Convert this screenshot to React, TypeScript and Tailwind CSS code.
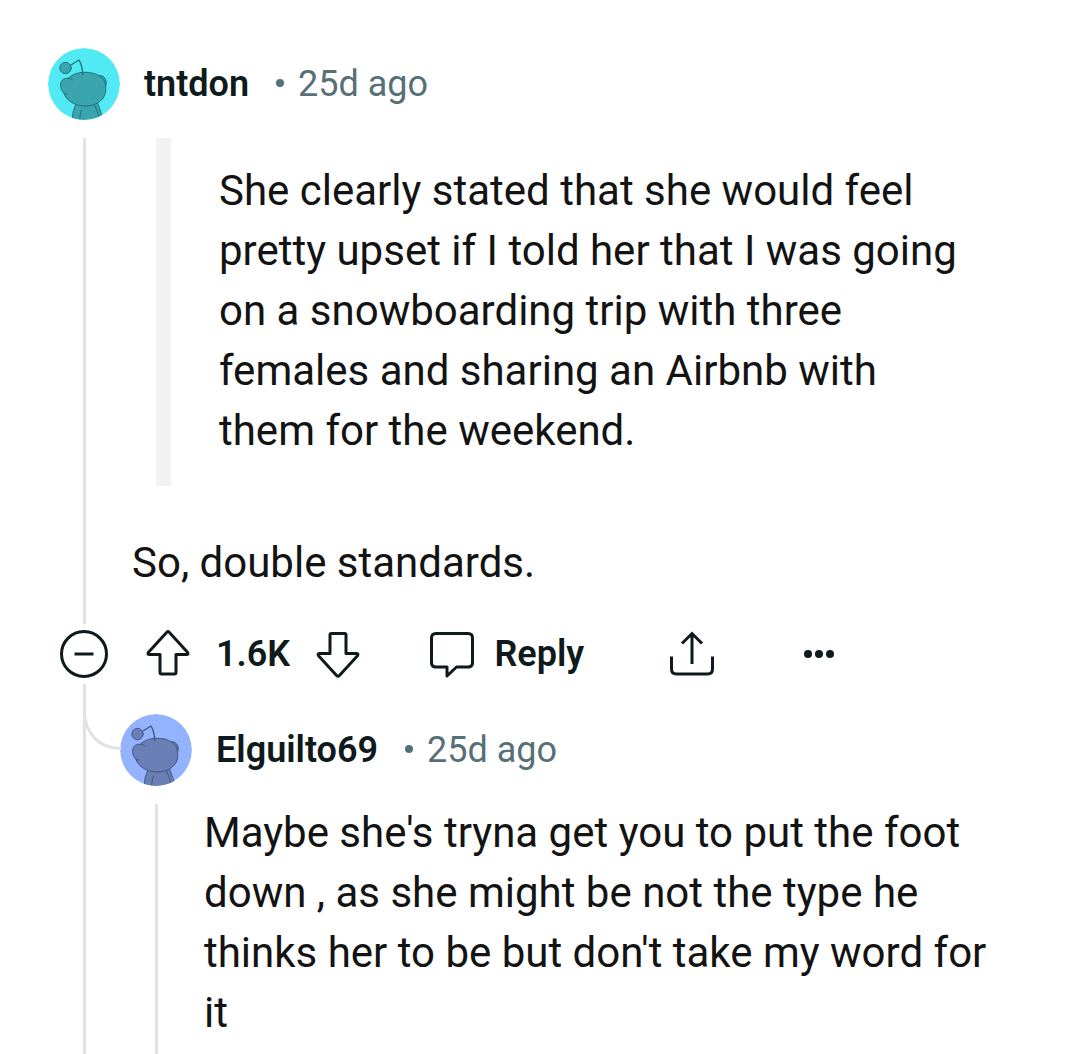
import React from "react";

type AvatarProps = { bg: string; body: string; line: string };

function Avatar({ bg, body, line }: AvatarProps) {
  return (
    <svg className="h-[72px] w-[72px] shrink-0 rounded-full" viewBox="0 0 72 72">
      <circle cx="36" cy="36" r="36" fill={bg} />
      <g fill={body} stroke={line} strokeWidth="1" strokeLinecap="round" strokeLinejoin="round">
        <path d="M50.500 28C55 26 60.500 32 57.500 38.500Z" />
        <path d="M24.200 74C24.200 66 25.500 61 28.500 55H49.500C52 61 54 66 54.500 74Z" />
        <path d="M33.500 62C32 65 31.800 69 31.800 73M46.200 57C48.800 61 50.500 66 51.500 73" fill="none" />
        <path d="M20 30.500C24 26.500 30 24.300 37 24.300C46 24.300 53 27.500 56 32.500C57.200 35 57.800 38 57.800 41.500C57.800 51 49 58 38 58C27 58 18.500 53 15.800 45C11.500 41 11.500 33.500 15.500 31.200C18 30 22 29.500 24.500 31.800" />
        <path d="M15.800 45C17 46 18 46.200 19.500 45.800" fill="none" />
        <path d="M34.800 26.500C34.500 21 33.500 16 31 12L23 17" fill="none" strokeWidth="1.400" />
        <circle cx="17.500" cy="20" r="5.700" />
      </g>
    </svg>
  );
}

function Byline({ name, children }: { name: string; children: React.ReactNode }) {
  return (
    <header className="flex h-[72px] items-center text-[36px] leading-[42px]">
      {children}
      <span className="ml-6 font-semibold text-[#0f1a1c]">{name}</span>
      <span className="relative -top-[1.5px] ml-[26.5px] h-[8px] w-[8px] rounded-full bg-[#576f76]" />
      <span className="ml-[14.5px] text-[#576f76]">25d ago</span>
    </header>
  );
}

const icon = "shrink-0 fill-none stroke-[#0f1a1c] stroke-[3px]";

function Actions() {
  return (
    <div className="flex h-[60px] items-center pl-[59px] text-[36px] font-semibold leading-[42px] text-[#0f1a1c]">
      <svg className={icon} width="50" height="50" viewBox="0 0 50 50">
        <circle cx="25" cy="25" r="22.500" />
        <path d="M15.500 25H34.500" />
      </svg>
      <svg className={`${icon} ml-[36px]`} width="46" height="50" viewBox="0 0 46 50" strokeLinejoin="round">
        <path d="M21.800 3.300Q23 2.100 24.200 3.300L42.500 23.300Q43.700 25.500 41.700 25.500H31V43.500Q31 45 29.500 45H16.500Q15 45 15 43.500V25.500H4.300Q2.300 25.500 3.500 23.300Z" />
      </svg>
      <span className="ml-[25px] w-[75px]">1.6K</span>
      <svg className={`${icon} ml-[24px]`} width="46" height="50" viewBox="0 0 46 50" strokeLinejoin="round">
        <path d="M21.800 46.700Q23 47.900 24.200 46.700L42.500 26.700Q43.700 24.500 41.700 24.500H31V6Q31 4.500 29.500 4.500H16.500Q15 4.500 15 6V24.500H4.300Q2.300 24.500 3.500 26.700Z" />
      </svg>
      <svg className={`${icon} ml-[68px]`} width="46" height="50" viewBox="0 0 46 50" strokeLinejoin="round">
        <path d="M7 4.500H39Q43.500 4.500 43.500 9V33.500Q43.500 38 39 38H27.500L18 47V38H7Q2.500 38 2.500 33.500V9Q2.500 4.500 7 4.500Z" />
      </svg>
      <span className="ml-[19.5px] w-[88.5px]">Reply</span>
      <svg className={`${icon} ml-[85px]`} width="48" height="50" viewBox="0 0 48 50">
        <path d="M24 35V5M14 14.500L24 4.500L34 14.500M3.500 27.500V40Q3.500 45 8.500 45H39.500Q44.500 45 44.500 40V27.500" />
      </svg>
      <div className="ml-[87.5px] flex gap-[3px]">
        <span className="h-2 w-2 rounded-full bg-[#0f1a1c]" />
        <span className="h-2 w-2 rounded-full bg-[#0f1a1c]" />
        <span className="h-2 w-2 rounded-full bg-[#0f1a1c]" />
      </div>
    </div>
  );
}

export default function App() {
  return (
    <main className="flex h-[1054px] w-[1080px] flex-col overflow-hidden bg-white pt-12 font-[Roboto,sans-serif] text-[42px] leading-[60px] text-[#131313]">
      <div className="mb-[18px] pl-12">
        <Byline name="tntdon">
          <Avatar bg="#51e9f4" body="#3ba5ae" line="#1f737a" />
        </Byline>
      </div>
      <section className="flex h-[486px] pl-[83px]">
        <div className="w-[3px] shrink-0 bg-[#e2e2e2]" />
        <div className="pl-[46px]">
          <blockquote className="ml-[24px] h-[348px] whitespace-nowrap border-l-[15px] border-[#f2f2f2] pl-[48px] pt-[23px]">
            <p>She clearly stated that she would feel</p>
            <p>pretty upset if I told her that I was going</p>
            <p>on a snowboarding trip with three</p>
            <p>females and sharing an Airbnb with</p>
            <p>them for the weekend.</p>
          </blockquote>
          <p className="mt-[47px]">So, double standards.</p>
        </div>
      </section>
      <Actions />
      <section className="flex grow pl-[83px]">
        <div className="relative w-[3px] shrink-0 bg-[#e2e2e2]">
          <svg className="absolute left-0 top-0 fill-none stroke-[#e2e2e2] stroke-[3px]" width="40" height="72" viewBox="0 0 40 72">
            <path d="M1.500 27C1.500 48 15 64.500 38 64.500" />
          </svg>
        </div>
        <div className="flex flex-col pl-[34px] pt-[30px]">
          <Byline name="Elguilto69">
            <Avatar bg="#94b3ff" body="#697fb5" line="#455682" />
          </Byline>
          <div className="mt-[18px] flex grow pl-[35px]">
            <div className="w-[3px] shrink-0 bg-[#e2e2e2]" />
            <div className="-mt-px whitespace-nowrap pl-[46px]">
              <p>Maybe she's tryna get you to put the foot</p>
              <p>down , as she might be not the type he</p>
              <p>thinks her to be but don't take my word for</p>
              <p>it</p>
            </div>
          </div>
        </div>
      </section>
    </main>
  );
}
